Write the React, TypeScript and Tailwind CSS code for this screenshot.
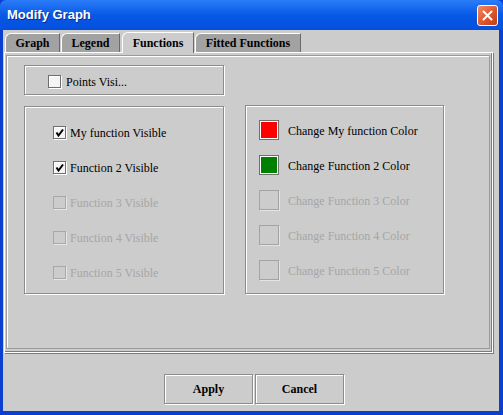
import React from "react";

type Row = { label: string; enabled: boolean; checked?: boolean; color?: string };

const visibleRows: Row[] = [
  { label: "My function Visible", enabled: true, checked: true },
  { label: "Function 2 Visible", enabled: true, checked: true },
  { label: "Function 3 Visible", enabled: false },
  { label: "Function 4 Visible", enabled: false },
  { label: "Function 5 Visible", enabled: false },
];

const colorRows: Row[] = [
  { label: "Change My function Color", enabled: true, color: "bg-[#ff0000]" },
  { label: "Change Function 2 Color", enabled: true, color: "bg-[#008000]" },
  { label: "Change Function 3 Color", enabled: false },
  { label: "Change Function 4 Color", enabled: false },
  { label: "Change Function 5 Color", enabled: false },
];

const tabs = [
  { label: "Graph", w: "w-[55px]", active: false },
  { label: "Legend", w: "w-[59px]", active: false },
  { label: "Functions", w: "w-[72px]", active: true },
  { label: "Fitted Functions", w: "w-[106px]", active: false },
];

const CheckBox = ({ checked, enabled }: { checked?: boolean; enabled: boolean }) => (
  <span
    className={`flex h-[13px] w-[13px] shrink-0 items-center justify-center border ${
      enabled
        ? "border-[#6f6f6f] bg-[#f4f4f4] shadow-[inset_1px_1px_0_#ffffff,1px_1px_0_#ffffff]"
        : "border-[#a8a8a8] shadow-[1px_1px_0_#e6e6e6]"
    }`}
  >
    {checked && (
      <svg width="9" height="9" viewBox="0 0 9 9">
        <path d="M1.5 4.5 L3.5 7.5 L8 1.5" fill="none" stroke="#000" strokeWidth="2" />
      </svg>
    )}
  </span>
);

const etched = "border border-[#8c8c8c] shadow-[inset_1px_1px_0_#ffffff,1px_1px_0_#ffffff]";

export default function App() {
  return (
    <div className="flex h-[415px] w-[503px] flex-col bg-[#0a3fd0] font-['Liberation_Serif',serif] text-[12px]">
      {/* title bar */}
      <div className="flex h-[30px] shrink-0 items-center justify-between rounded-t-[6px] bg-gradient-to-b from-[#2a7cf8] via-[#0759e6] to-[#0450dc] pl-[7px] pr-[5px]">
        <span className="font-['Liberation_Sans',sans-serif] text-[13px] font-bold text-white [text-shadow:1px_1px_0_#0a2a8a]">
          Modify Graph
        </span>
        <span className="flex h-[21px] w-[21px] items-center justify-center rounded-[3px] border border-white bg-gradient-to-br from-[#f08a66] via-[#e05a2f] to-[#c23c14]">
          <svg width="11" height="11" viewBox="0 0 11 11">
            <path d="M1.5 1.5 L9.5 9.5 M9.5 1.5 L1.5 9.5" stroke="#fff" strokeWidth="2" strokeLinecap="round" />
          </svg>
        </span>
      </div>

      {/* client area */}
      <div className="mb-[4px] ml-[3px] mr-[4px] flex flex-1 flex-col bg-[#cccccc]">
        {/* tabs */}
        <div className="ml-[2px] mt-[2px] flex h-[20px] items-end gap-[1px]">
          {tabs.map((t) => (
            <div
              key={t.label}
              className={`flex items-center justify-center rounded-tl-[6px] border-l border-t border-r border-l-[#ffffff] border-t-[#ffffff] border-r-[#6a6a6a] font-bold text-black ${t.w} ${
                t.active ? "relative z-10 -mb-[1px] h-[21px] bg-[#cccccc]" : "h-[19px] bg-[#a2a2a2]"
              } ${t.label === "Functions" ? "ml-[1px]" : ""}`}
            >
              {t.label}
            </div>
          ))}
        </div>

        {/* panel */}
        <div className="ml-[1px] h-[301px] w-[489px] border border-[#ffffff] shadow-[inset_-1px_-1px_0_#7c7c7c,1px_1px_0_#7c7c7c]">
          <div className="ml-[1px] mt-[2px] flex h-[294px] w-[484px] flex-col border border-[#9a9a9a] pl-[17px] pt-[9px] shadow-[inset_1px_1px_0_#ffffff]">
            <div className={`flex h-[30px] w-[200px] items-center pl-[23px] pt-[3px] ${etched}`}>
              <CheckBox enabled />
              <span className="ml-[5px]">Points Visi...</span>
            </div>

            <div className="mt-[11px] flex gap-[21px]">
              <div className={`flex h-[188px] w-[200px] flex-col pl-[28px] pt-[8px] ${etched}`}>
                {visibleRows.map((r) => (
                  <div key={r.label} className="flex h-[35px] items-center">
                    <CheckBox enabled={r.enabled} checked={r.checked} />
                    <span className={`ml-[4px] ${r.enabled ? "text-black" : "text-[#a6a6a6]"}`}>{r.label}</span>
                  </div>
                ))}
              </div>

              <div className={`-mt-[1px] flex h-[189px] w-[199px] flex-col pl-[13px] pt-[6px] ${etched}`}>
                {colorRows.map((r) => (
                  <div key={r.label} className="flex h-[35px] items-center">
                    <span
                      className={`h-[20px] w-[20px] shrink-0 border ${
                        r.enabled
                          ? `border-[#6f6f6f] ${r.color} shadow-[inset_1px_1px_0_#ffffff,inset_-1px_-1px_0_#ffffff]`
                          : "border-[#a3a3a3] shadow-[1px_1px_0_#e4e4e4]"
                      }`}
                    />
                    <span className={`ml-[9px] mt-[3px] ${r.enabled ? "text-black" : "text-[#a6a6a6]"}`}>{r.label}</span>
                  </div>
                ))}
              </div>
            </div>
          </div>
        </div>

        {/* buttons */}
        <div className="mt-[21px] flex gap-[2px] pl-[161px]">
          {["Apply", "Cancel"].map((b) => (
            <div
              key={b}
              className={`flex h-[30px] w-[89px] items-center justify-center font-bold text-black ${etched}`}
            >
              {b}
            </div>
          ))}
        </div>
      </div>
    </div>
  );
}
